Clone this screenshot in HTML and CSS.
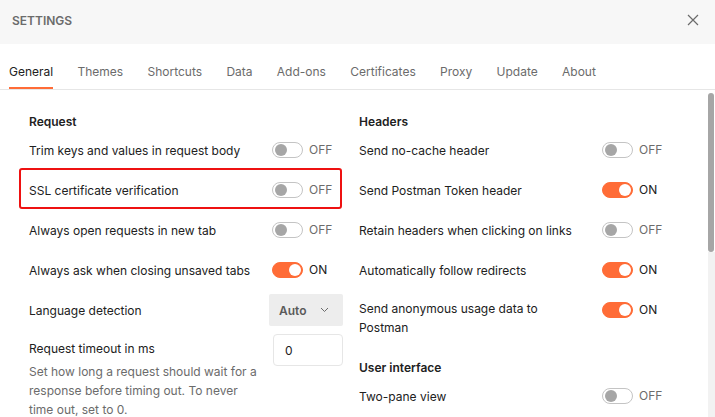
FILE: index.html
```html
<!DOCTYPE html>
<html lang="en">
<head>
<meta charset="utf-8">
<title>Settings</title>
<link rel="stylesheet" href="styles.css">
</head>
<body>
<div class="modal">
  <header class="modal-header">
    <span class="modal-title">SETTINGS</span>
    <button class="close-btn" aria-label="Close">
      <svg width="12" height="12" viewBox="0 0 12 12"><path d="M1 1L11 11M11 1L1 11" stroke="#6b6b6b" stroke-width="1.2" fill="none"/></svg>
    </button>
  </header>
  <nav class="tabs">
    <span class="tab active">General</span>
    <span class="tab">Themes</span>
    <span class="tab">Shortcuts</span>
    <span class="tab">Data</span>
    <span class="tab">Add-ons</span>
    <span class="tab">Certificates</span>
    <span class="tab">Proxy</span>
    <span class="tab">Update</span>
    <span class="tab">About</span>
  </nav>
  <div class="body">
    <div class="content">
      <section class="col">
        <h3 class="section-title">Request</h3>
        <div class="row">
          <span class="label">Trim keys and values in request body</span>
          <span class="switch"><span class="toggle"><span class="knob"></span></span><span class="state">OFF</span></span>
        </div>
        <div class="row highlight">
          <span class="label">SSL certificate verification</span>
          <span class="switch"><span class="toggle"><span class="knob"></span></span><span class="state">OFF</span></span>
        </div>
        <div class="row">
          <span class="label">Always open requests in new tab</span>
          <span class="switch"><span class="toggle"><span class="knob"></span></span><span class="state">OFF</span></span>
        </div>
        <div class="row">
          <span class="label">Always ask when closing unsaved tabs</span>
          <span class="switch"><span class="toggle on"><span class="knob"></span></span><span class="state on">ON</span></span>
        </div>
        <div class="row row-select">
          <span class="label">Language detection</span>
          <span class="dropdown">Auto
            <svg width="9" height="6" viewBox="0 0 9 6"><path d="M1 1L4.5 4.5L8 1" stroke="#6b6b6b" stroke-width="1" fill="none"/></svg>
          </span>
        </div>
        <div class="row row-input">
          <div class="label-block">
            <div class="label">Request timeout in ms</div>
            <div class="desc">Set how long a request should wait for a response before timing out. To never time out, set to 0.</div>
          </div>
          <span class="input">0</span>
        </div>
      </section>
      <section class="col">
        <h3 class="section-title">Headers</h3>
        <div class="row">
          <span class="label">Send no-cache header</span>
          <span class="switch"><span class="toggle"><span class="knob"></span></span><span class="state">OFF</span></span>
        </div>
        <div class="row">
          <span class="label">Send Postman Token header</span>
          <span class="switch"><span class="toggle on"><span class="knob"></span></span><span class="state on">ON</span></span>
        </div>
        <div class="row">
          <span class="label">Retain headers when clicking on links</span>
          <span class="switch"><span class="toggle"><span class="knob"></span></span><span class="state">OFF</span></span>
        </div>
        <div class="row">
          <span class="label">Automatically follow redirects</span>
          <span class="switch"><span class="toggle on"><span class="knob"></span></span><span class="state on">ON</span></span>
        </div>
        <div class="row">
          <span class="label anon">Send anonymous usage data to Postman</span>
          <span class="switch"><span class="toggle on"><span class="knob"></span></span><span class="state on">ON</span></span>
        </div>
        <h3 class="section-title sub">User interface</h3>
        <div class="row">
          <span class="label">Two-pane view</span>
          <span class="switch"><span class="toggle"><span class="knob"></span></span><span class="state">OFF</span></span>
        </div>
      </section>
    </div>
    <div class="scrollbar">
      <div class="thumb"></div>
      <div class="track"></div>
    </div>
  </div>
</div>
</body>
</html>
```
FILE: styles.css
```css
* { box-sizing: border-box; }
html, body {
  margin: 0;
  padding: 0;
  width: 715px;
  height: 417px;
  overflow: hidden;
  background: #fff;
  font-family: Inter, "Noto Sans", sans-serif;
  font-size: 12px;
  color: #212121;
}
.modal {
  display: flex;
  flex-direction: column;
  height: 417px;
}
.modal-header {
  height: 44px;
  flex: none;
  background: #f7f7f7;
  display: flex;
  align-items: center;
  justify-content: space-between;
  padding: 0 16px 0 12px;
}
.modal-title {
  font-size: 12px;
  font-weight: 600;
  color: #6b6b6b;
  line-height: 16px;
  margin-top: -3px;
}
.close-btn {
  border: 0;
  background: none;
  padding: 0;
  width: 12px;
  height: 12px;
  display: flex;
  margin-top: -4px;
}
.tabs {
  flex: none;
  height: 46px;
  border-bottom: 1px solid #e6e6e6;
  display: flex;
  gap: 24.3px;
  padding-left: 9px;
}
.tab {
  display: flex;
  align-items: flex-end;
  padding-bottom: 7px;
  border-bottom: 2px solid transparent;
  line-height: 16px;
  color: #6b6b6b;
}
.tab.active {
  color: #212121;
  border-bottom-color: #ff6c37;
}
.body {
  flex: 1;
  display: flex;
  min-height: 0;
}
.content {
  flex: 1;
  display: grid;
  grid-template-columns: 314px 314px;
  column-gap: 16px;
  align-items: start;
  padding: 23px 0 0 29px;
}
.section-title {
  margin: 0;
  font-size: 12px;
  font-weight: 600;
  line-height: 17px;
  color: #212121;
}
.section-title.sub {
  margin-top: 12px;
}
.row {
  display: grid;
  grid-template-columns: 1fr 71px;
  align-items: start;
  padding: 10px 0;
  position: relative;
}
.label {
  line-height: 19px;
  padding-top: 1px;
}
.label.anon {
  padding-right: 40px;
  padding-top: 0;
  margin-top: -1px;
}
.row.highlight::after {
  content: "";
  position: absolute;
  left: -10px;
  right: 1px;
  top: -2px;
  bottom: 1px;
  border: 2px solid #ee1111;
  border-radius: 3px;
}
.switch {
  display: flex;
  align-items: center;
  height: 20px;
  gap: 6px;
}
.toggle {
  width: 31px;
  height: 16px;
  border-radius: 8px;
  border: 1px solid #c4c4c4;
  background: #fff;
  display: flex;
  align-items: center;
  padding: 0 2px;
}
.knob {
  width: 12px;
  height: 12px;
  border-radius: 50%;
  background: #a6a6a6;
}
.toggle.on {
  background: #ff6c37;
  border-color: #ff6c37;
  justify-content: flex-end;
  padding: 0 1px;
}
.toggle.on .knob {
  background: #fff;
}
.state {
  font-size: 12px;
  line-height: 16px;
  color: #6b6b6b;
}
.state.on {
  color: #212121;
}
.row-select {
  padding: 4px 0;
  align-items: center;
}
.dropdown {
  margin-left: -3px;
  width: 74px;
  height: 32px;
  background: #ededed;
  border-radius: 2px;
  display: flex;
  align-items: center;
  justify-content: space-between;
  padding: 0 14px 0 10px;
  font-weight: 600;
  color: #5a5a5a;
}
.row-input {
  padding: 4px 0 0;
}
.label-block {
  padding-top: 4px;
}
.desc {
  margin-top: 4px;
  width: 235px;
  line-height: 19px;
  color: #6b6b6b;
}
.input {
  margin-left: 1px;
  width: 70px;
  height: 32px;
  border: 1px solid #e6e6e6;
  border-radius: 4px;
  background: #fff;
  display: flex;
  align-items: center;
  padding: 0 11px;
  color: #212121;
}
.scrollbar {
  flex: none;
  width: 7px;
  display: flex;
  flex-direction: column;
  padding-top: 3px;
}
.thumb {
  height: 159px;
  width: 6px;
  background: #a6a6a6;
  border-radius: 3px;
}
.track {
  flex: 1;
  background: #f2f2f2;
}
```
